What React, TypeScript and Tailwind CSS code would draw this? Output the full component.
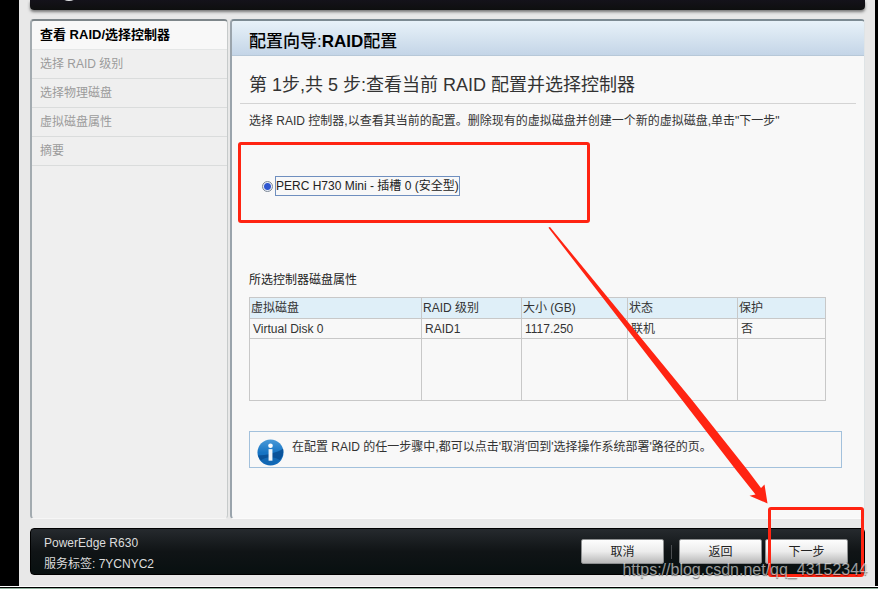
import { useState } from "react";

const steps = [
  "查看 RAID/选择控制器",
  "选择 RAID 级别",
  "选择物理磁盘",
  "虚拟磁盘属性",
  "摘要",
];

const columns = [
  { label: "虚拟磁盘", width: "w-[172px]" },
  { label: "RAID 级别", width: "w-[100px]" },
  { label: "大小 (GB)", width: "w-[106px]" },
  { label: "状态", width: "w-[110px]" },
  { label: "保护", width: "w-[88px]" },
];

const disks = [["Virtual Disk 0", "RAID1", "1117.250", "联机", "否"]];

function TopBar() {
  return (
    <header className="h-[10px] overflow-hidden rounded-b-[4px] bg-gradient-to-b from-[#14121a] to-[#0e0f0f] pl-7 shadow-[0_2px_3px_#777]">
      <svg className="-mt-[22px]" width="24" height="24" viewBox="0 0 24 24">
        <circle cx="11" cy="12" r="10" fill="none" stroke="#e4e6e8" strokeWidth="2" />
      </svg>
    </header>
  );
}

function Sidebar() {
  return (
    <nav className="w-[198px] shrink-0 rounded-[4px] border-t-2 border-r border-b border-l-2 border-t-[#7e868a] border-r-[#c6caca] border-b-[#f6f6f6] border-l-[#a3abb0] bg-[#efefef]">
      <ol>
        {steps.map((step, i) => (
          <li
            key={step}
            aria-current={i === 0 ? "step" : undefined}
            className={
              i === 0
                ? "flex h-[29px] items-center rounded-t-[3px] border-b border-[#e4e6e6] bg-[#f8f8f8] px-2 text-[13px] font-bold text-black"
                : "flex h-[29px] items-center border-b border-[#dadcdc] px-2 text-[#9b9b9b]"
            }
          >
            {step}
          </li>
        ))}
      </ol>
    </nav>
  );
}

function ControllerPicker() {
  const [controller, setController] = useState("h730");

  return (
    <div className="relative mt-[45px] flex h-5 items-center gap-[2px] pl-[13px]">
      <input
        id="h730"
        type="radio"
        name="controller"
        checked={controller === "h730"}
        onChange={() => setController("h730")}
        className="size-[11px] appearance-none rounded-full border border-[#7b8795] bg-white checked:bg-[radial-gradient(circle,#2f57d0_0_3px,#e8edf8_4px)]"
      />
      <label
        htmlFor="h730"
        className="flex h-5 items-center border border-[#6f8fbf] text-[#222]"
      >
        PERC H730 Mini - 插槽 0 (安全型)
      </label>
      <div className="pointer-events-none absolute -top-[34px] -left-[11px] h-[81px] w-[352px] rounded-[3px] border-3 border-[#ff2412]" />
    </div>
  );
}

function DiskTable() {
  return (
    <table className="mt-[7px] w-[576px] table-fixed border-collapse text-left leading-4 text-[#333]">
      <thead>
        <tr className="h-[21px] bg-[#dfeff8]">
          {columns.map((c) => (
            <th
              key={c.label}
              className={`${c.width} border border-[#c8c8c8] px-px py-0 font-normal`}
            >
              {c.label}
            </th>
          ))}
        </tr>
      </thead>
      <tbody>
        {disks.map((row) => (
          <tr key={row[0]} className="h-5">
            {row.map((cell) => (
              <td key={cell} className="border border-[#c8c8c8] px-[3px] py-0">
                {cell}
              </td>
            ))}
          </tr>
        ))}
        <tr className="h-[62px]">
          {columns.map((c) => (
            <td key={c.label} className="border border-[#c8c8c8]" />
          ))}
        </tr>
      </tbody>
    </table>
  );
}

function InfoIcon() {
  return (
    <svg className="mt-[7px] shrink-0" width="27" height="27" viewBox="0 0 28 28">
      <defs>
        <linearGradient id="ball" x1="0" y1="0" x2="0" y2="1">
          <stop offset="0" stopColor="#4a9ad8" />
          <stop offset="0.5" stopColor="#1674c4" />
          <stop offset="1" stopColor="#0f66b6" />
        </linearGradient>
      </defs>
      <circle cx="14" cy="14" r="13.5" fill="url(#ball)" />
      <path d="M1 17C9 17 21 14 27 10A13.5 13.5 0 0 1 1 17Z" fill="#07488c" opacity="0.75" />
      <path d="M4 22A13.5 13.5 0 0 0 24 22C18 18 10 18 4 22Z" fill="#1c7fd0" opacity="0.5" />
      <circle cx="14" cy="7" r="2.4" fill="#fff" />
      <rect x="12" y="10.5" width="4" height="12" fill="#f1f5f9" />
    </svg>
  );
}

function Content() {
  return (
    <main className="min-w-0 flex-1 rounded-[4px] border-t-2 border-r border-b border-l-2 border-t-[#7d8b93] border-r-[#dfe4e6] border-b-[#fbfbfb] border-l-[#9aa4ac] bg-[#f8f8f8]">
      <h1 className="flex h-[35px] items-center rounded-t-[3px] border-b border-[#b7c8d8] bg-gradient-to-b from-[#e8f2f9] to-[#c4d5e7] px-[17px] pt-2 text-[17px] font-medium text-black">
        配置向导:<b>RAID</b>配置
      </h1>
      <div className="px-2">
        <h2 className="border-b border-[#d4d4d4] px-[9px] pt-[15px] pb-1 text-[18px] leading-7 text-[#333]">
          第 1步,共 5 步:查看当前 RAID 配置并选择控制器
        </h2>
      </div>
      <div className="px-[17px] pt-[7px] leading-5">
        <p className="text-[#333]">
          选择 RAID 控制器,以查看其当前的配置。删除现有的虚拟磁盘并创建一个新的虚拟磁盘,单击"下一步"
        </p>
        <ControllerPicker />
        <h3 className="mt-[74px] text-[#222]">所选控制器磁盘属性</h3>
        <DiskTable />
        <div className="mt-[30px] mr-[5px] flex h-[37px] gap-2 overflow-hidden border border-[#a3c1dc] pl-[7px] text-[#333]">
          <InfoIcon />
          <p className="pt-[5px]">
            在配置 RAID 的任一步骤中,都可以点击'取消'回到'选择操作系统部署'路径的页。
          </p>
        </div>
      </div>
    </main>
  );
}

const buttonClass =
  "h-[25px] w-[83px] rounded-[2px] border border-[#8d8f90] bg-gradient-to-b from-[#fdfdfd] via-[#ececec] to-[#b9b9b9] text-[#222]";

function Footer() {
  return (
    <footer className="mt-[9px] flex h-[47px] items-center justify-between rounded-[4px] border border-black bg-gradient-to-b from-[#262a2e] via-[#101416] to-[#081010] pr-4 pl-[13px]">
      <div className="pt-1 leading-[21px] text-[#dcdcdc]">
        <p>PowerEdge R630</p>
        <p>服务标签: 7YCNYC2</p>
      </div>
      <div className="flex items-center">
        <button type="button" className={buttonClass}>
          取消
        </button>
        <span className="mx-[7px] h-[14px] w-px bg-[#4a4d50]" />
        <button type="button" className={buttonClass}>
          返回
        </button>
        <button type="button" className={`${buttonClass} ml-[3px]`}>
          下一步
        </button>
      </div>
    </footer>
  );
}

function Annotations() {
  return (
    <div className="pointer-events-none absolute inset-0 overflow-hidden">
      <svg className="absolute top-[226px] left-[547px]" width="224" height="280" viewBox="547 226 224 280">
        <path
          d="M548.5 227.5L550 227L692 400L747.5 470L761 488L764.5 484.5L767.5 503.5L749.5 495.7L755.5 494.5L736 470L682 400L549 228.5Z"
          fill="#ff2412"
        />
      </svg>
      <div className="absolute right-[14px] bottom-3 h-[70px] w-24 rounded-[3px] border-3 border-[#ff2412]" />
      <p className="absolute right-[10px] bottom-[9px] text-[16px] leading-5 text-white/60 [text-shadow:0_1px_1px_#0008]">
        https://blog.csdn.net/qq_43152344
      </p>
    </div>
  );
}

export default function App() {
  return (
    <div className="relative flex min-h-screen flex-col font-['Liberation_Sans','Noto_Sans_CJK_SC',sans-serif] text-[12px]">
      <div className="flex flex-1 flex-col border-r-3 border-l-[19px] border-black bg-[#e8e8e8] pr-[10px] pb-[11px] pl-[11px]">
        <TopBar />
        <div className="mt-[9px] flex flex-1 gap-[2px]">
          <Sidebar />
          <Content />
        </div>
        <Footer />
      </div>
      <div className="h-[3px] border-t border-b border-t-white border-b-[#8fb09c] bg-black" />
      <Annotations />
    </div>
  );
}
